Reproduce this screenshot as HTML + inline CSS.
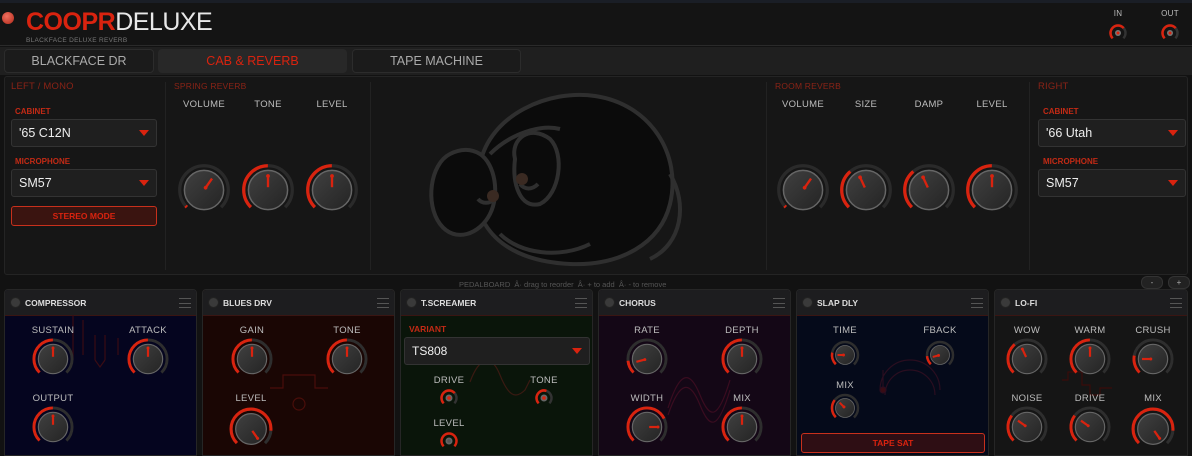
<!DOCTYPE html>
<html><head><meta charset="utf-8"><style>
*{box-sizing:border-box;margin:0;padding:0}
body{width:1192px;height:456px;background:#121212;font-family:"Liberation Sans",sans-serif;position:relative;overflow:hidden;color:#bbb}
.a{position:absolute}
.lbl{position:absolute;font-size:9.5px;color:#bdbdbd;transform:translateX(-50%);white-space:nowrap;letter-spacing:.3px}
.k{position:absolute;display:block;margin-left:-28px;margin-top:-28px;overflow:visible}
.sec{position:absolute;font-size:9px;color:#8a2316;letter-spacing:.2px}
.rl{position:absolute;font-size:8px;color:#c22a15;font-weight:bold}
.dd{position:absolute;background:#1f1f1f;border:1px solid #333;border-radius:3px;color:#eee;font-size:12.5px;padding-left:7px;display:flex;align-items:center}
.dd:after{content:"";position:absolute;right:7px;top:50%;margin-top:-3px;border-left:5px solid transparent;border-right:5px solid transparent;border-top:6px solid #d9230f}
.tab{position:absolute;top:49px;height:24px;border:1px solid #2c2c2c;border-radius:4px;background:#1b1b1b;color:#aaa;font-size:12.5px;display:flex;align-items:center;justify-content:center}
.ped{position:absolute;top:289px;height:167px;border-radius:4px 4px 0 0;overflow:hidden;border:1px solid #262626}
.ph{height:26px;background:#1d1d1f;border-bottom:1px solid #3a1512;position:relative}
.ph .led{position:absolute;left:5px;top:7px;width:11px;height:11px;border-radius:50%;background:#3a3a3a;border:1px solid #222}
.ph .t{position:absolute;left:20px;top:8px;font-size:8.5px;font-weight:bold;color:#ddd}
.ph .m{position:absolute;right:5px;top:8px;width:12px;height:10px;border-top:1px solid #555;border-bottom:1px solid #555}
.ph .m:after{content:"";position:absolute;left:0;right:0;top:4px;border-top:1px solid #555}
svg circle.b{fill:url(#g);stroke:#666;stroke-width:1.6}
.s44{margin-left:-22px;margin-top:-22px}.s46{margin-left:-23px;margin-top:-23px}.s30{margin-left:-15px;margin-top:-15px}.s20{margin-left:-10px;margin-top:-10px}
</style></head><body>
<svg width="0" height="0" style="position:absolute"><defs>
<linearGradient id="g" x1="0" y1="0" x2="1" y2="1"><stop offset="0" stop-color="#404040"/><stop offset="1" stop-color="#242424"/></linearGradient>
</defs></svg>

<div class="a" style="left:0;top:0;width:1192px;height:3px;background:#1a1e26"></div>
<div class="a" style="left:0;top:3px;width:1192px;height:43px;background:#141414;border-bottom:1px solid #2a2a2a"></div>
<div class="a" style="left:2px;top:12px;width:12px;height:12px;border-radius:50%;background:radial-gradient(circle at 40% 35%,#f07060,#b02818)"></div>
<div class="a" style="left:26px;top:8px;font-size:25px;font-weight:bold;letter-spacing:-.5px;line-height:28px"><span style="color:#d9230f">COOPR</span><span style="color:#e8e8e8;font-weight:normal">DELUXE</span></div>
<div class="a" style="left:26px;top:37px;font-size:6.5px;color:#777;letter-spacing:.3px">BLACKFACE DELUXE REVERB</div>
<div class="lbl" style="left:1118px;top:9px;font-size:8px">IN</div>
<div class="lbl" style="left:1170px;top:9px;font-size:8px">OUT</div>

<div class="a" style="left:0;top:47px;width:1192px;height:28px;background:#1f1f1f"></div>
<div class="tab" style="left:4px;width:150px">BLACKFACE DR</div>
<div class="tab" style="left:158px;width:189px;background:#282828;color:#d9230f;border-color:#282828">CAB &amp; REVERB</div>
<div class="tab" style="left:352px;width:169px">TAPE MACHINE</div>

<svg class="k s20" style="left:1118px;top:33px" width="20" height="20" viewBox="-10 -10 20 20"><circle r="7.5" fill="none" stroke="#333" stroke-width="2.5" stroke-dasharray="35 60" transform="rotate(135)"/><circle r="7.5" fill="none" stroke="#d9230f" stroke-width="2.5" stroke-dasharray="24 60" transform="rotate(135)"/><circle r="3" fill="#777"/><circle r="1.5" fill="#d9230f"/></svg>
<svg class="k s20" style="left:1170px;top:33px" width="20" height="20" viewBox="-10 -10 20 20"><circle r="7.5" fill="none" stroke="#333" stroke-width="2.5" stroke-dasharray="35 60" transform="rotate(135)"/><circle r="7.5" fill="none" stroke="#d9230f" stroke-width="2.5" stroke-dasharray="24 60" transform="rotate(135)"/><circle r="3" fill="#777"/><circle r="1.5" fill="#d9230f"/></svg>

<div class="a" style="left:4px;top:76px;width:1184px;height:199px;background:#161616;border:1px solid #242424;border-radius:3px"></div>
<div class="a" style="left:165px;top:82px;width:1px;height:188px;background:#222"></div>
<div class="a" style="left:370px;top:82px;width:1px;height:188px;background:#222"></div>
<div class="a" style="left:766px;top:82px;width:1px;height:188px;background:#222"></div>
<div class="a" style="left:1029px;top:82px;width:1px;height:188px;background:#222"></div>

<div class="sec" style="left:11px;top:81px;font-size:9.5px">LEFT / MONO</div>
<div class="rl" style="left:15px;top:107px">CABINET</div>
<div class="dd" style="left:11px;top:119px;width:146px;height:28px">'65 C12N</div>
<div class="rl" style="left:15px;top:157px">MICROPHONE</div>
<div class="dd" style="left:11px;top:169px;width:146px;height:28px">SM57</div>
<div class="a" style="left:11px;top:206px;width:146px;height:20px;background:#3a1410;border:1px solid #c8301c;border-radius:3px;color:#d9230f;font-size:8.5px;font-weight:bold;display:flex;align-items:center;justify-content:center">STEREO MODE</div>

<div class="sec" style="left:174px;top:81px;font-size:8.5px">SPRING REVERB</div>
<div class="lbl" style="left:204px;top:99px">VOLUME</div>
<div class="lbl" style="left:268px;top:99px">TONE</div>
<div class="lbl" style="left:332px;top:99px">LEVEL</div>

<div class="sec" style="left:775px;top:81px;font-size:8.5px">ROOM REVERB</div>
<div class="lbl" style="left:803px;top:99px">VOLUME</div>
<div class="lbl" style="left:866px;top:99px">SIZE</div>
<div class="lbl" style="left:929px;top:99px">DAMP</div>
<div class="lbl" style="left:992px;top:99px">LEVEL</div>

<div class="sec" style="left:1038px;top:81px;font-size:9.5px">RIGHT</div>
<div class="rl" style="left:1043px;top:107px">CABINET</div>
<div class="dd" style="left:1038px;top:119px;width:148px;height:28px">'66 Utah</div>
<div class="rl" style="left:1043px;top:157px">MICROPHONE</div>
<div class="dd" style="left:1038px;top:169px;width:148px;height:28px">SM57</div>

<svg class="a" style="left:420px;top:84px" width="280" height="190" viewBox="0 0 280 190">
<g fill="none" stroke="#2f2f2f" stroke-width="4">
<path d="M60 80 C70 30 130 5 175 12 C230 20 262 70 250 120 C240 160 200 182 150 180 C110 178 80 165 65 140" fill="#0b0b0b"/>
<path d="M250 90 C268 120 262 160 230 175"/>
<path d="M30 70 C10 80 5 120 20 140 C35 160 60 150 70 130 C80 110 75 80 60 70 C50 64 40 65 30 70 Z" fill="#0b0b0b"/>
<path d="M70 70 C90 50 120 40 140 45"/>
<path d="M95 75 C90 55 110 40 130 55 C145 70 140 110 120 120 C100 125 92 100 95 75 Z" fill="#0b0b0b"/>
<path d="M80 150 C100 170 140 175 170 160"/>
<path d="M58 115 C62 120 70 120 74 115"/>
<path d="M100 100 C105 106 112 106 118 100"/>
</g>
<circle cx="73" cy="112" r="6" fill="#3a2a22"/><circle cx="102" cy="95" r="6" fill="#3a2a22"/>
</svg>

<svg class="k" style="left:204px;top:190px" width="56" height="56" viewBox="-30 -30 60 60"><circle r="26" fill="none" stroke="#2a2a2a" stroke-width="3.5" stroke-dasharray="122.5 200" transform="rotate(135)"/><circle class="b" r="21"/><circle r="26" fill="none" stroke="#d9230f" stroke-width="3.5" stroke-dasharray="2 200" transform="rotate(135)"/><g transform="rotate(35)"><line y1="-3" y2="-15" stroke="#d9230f" stroke-width="2.5"/><circle cy="-3" r="2" fill="#d9230f"/></g></svg>
<svg class="k" style="left:268px;top:190px" width="56" height="56" viewBox="-30 -30 60 60"><circle r="26" fill="none" stroke="#2a2a2a" stroke-width="3.5" stroke-dasharray="122.5 200" transform="rotate(135)"/><circle class="b" r="21"/><circle r="26" fill="none" stroke="#d9230f" stroke-width="3.5" stroke-dasharray="61 200" transform="rotate(135)"/><line y1="-3" y2="-15" stroke="#d9230f" stroke-width="2.5"/><circle cy="-15" r="2" fill="#d9230f"/></svg>
<svg class="k" style="left:332px;top:190px" width="56" height="56" viewBox="-30 -30 60 60"><circle r="26" fill="none" stroke="#2a2a2a" stroke-width="3.5" stroke-dasharray="122.5 200" transform="rotate(135)"/><circle class="b" r="21"/><circle r="26" fill="none" stroke="#d9230f" stroke-width="3.5" stroke-dasharray="61 200" transform="rotate(135)"/><line y1="-3" y2="-15" stroke="#d9230f" stroke-width="2.5"/><circle cy="-15" r="2" fill="#d9230f"/></svg>
<svg class="k" style="left:803px;top:190px" width="56" height="56" viewBox="-30 -30 60 60"><circle r="26" fill="none" stroke="#2a2a2a" stroke-width="3.5" stroke-dasharray="122.5 200" transform="rotate(135)"/><circle class="b" r="21"/><circle r="26" fill="none" stroke="#d9230f" stroke-width="3.5" stroke-dasharray="2 200" transform="rotate(135)"/><g transform="rotate(35)"><line y1="-3" y2="-15" stroke="#d9230f" stroke-width="2.5"/><circle cy="-3" r="2" fill="#d9230f"/></g></svg>
<svg class="k" style="left:866px;top:190px" width="56" height="56" viewBox="-30 -30 60 60"><circle r="26" fill="none" stroke="#2a2a2a" stroke-width="3.5" stroke-dasharray="122.5 200" transform="rotate(135)"/><circle class="b" r="21"/><circle r="26" fill="none" stroke="#d9230f" stroke-width="3.5" stroke-dasharray="43 200" transform="rotate(135)"/><g transform="rotate(-25)"><line y1="-3" y2="-15" stroke="#d9230f" stroke-width="2.5"/><circle cy="-15" r="2" fill="#d9230f"/></g></svg>
<svg class="k" style="left:929px;top:190px" width="56" height="56" viewBox="-30 -30 60 60"><circle r="26" fill="none" stroke="#2a2a2a" stroke-width="3.5" stroke-dasharray="122.5 200" transform="rotate(135)"/><circle class="b" r="21"/><circle r="26" fill="none" stroke="#d9230f" stroke-width="3.5" stroke-dasharray="43 200" transform="rotate(135)"/><g transform="rotate(-25)"><line y1="-3" y2="-15" stroke="#d9230f" stroke-width="2.5"/><circle cy="-15" r="2" fill="#d9230f"/></g></svg>
<svg class="k" style="left:992px;top:190px" width="56" height="56" viewBox="-30 -30 60 60"><circle r="26" fill="none" stroke="#2a2a2a" stroke-width="3.5" stroke-dasharray="122.5 200" transform="rotate(135)"/><circle class="b" r="21"/><circle r="26" fill="none" stroke="#d9230f" stroke-width="3.5" stroke-dasharray="61 200" transform="rotate(135)"/><line y1="-3" y2="-15" stroke="#d9230f" stroke-width="2.5"/><circle cy="-15" r="2" fill="#d9230f"/></svg>

<div class="a" style="left:459px;top:280px;font-size:7.5px;color:#555;white-space:nowrap">PEDALBOARD &nbsp;Â· drag to reorder &nbsp;Â· + to add &nbsp;Â· - to remove</div>
<div class="a" style="left:1141px;top:276px;width:22px;height:13px;border-radius:6px;background:#222;border:1px solid #333;color:#aaa;font-size:8px;text-align:center;line-height:11px">-</div>
<div class="a" style="left:1168px;top:276px;width:22px;height:13px;border-radius:6px;background:#222;border:1px solid #333;color:#aaa;font-size:8px;text-align:center;line-height:11px">+</div>

<div class="ped" style="left:4px;width:193px;background:#05051f"><div class="ph"><div class="led"></div><div class="t">COMPRESSOR</div><div class="m"></div></div></div>
<div class="ped" style="left:202px;width:193px;background:#1a0604"><div class="ph"><div class="led"></div><div class="t">BLUES DRV</div><div class="m"></div></div></div>
<div class="ped" style="left:400px;width:193px;background:#0a150a"><div class="ph"><div class="led"></div><div class="t">T.SCREAMER</div><div class="m"></div></div></div>
<div class="ped" style="left:598px;width:193px;background:#140716"><div class="ph"><div class="led"></div><div class="t">CHORUS</div><div class="m"></div></div></div>
<div class="ped" style="left:796px;width:193px;background:#050a1a"><div class="ph"><div class="led"></div><div class="t">SLAP DLY</div><div class="m"></div></div></div>
<div class="ped" style="left:994px;width:194px;background:#151515"><div class="ph"><div class="led"></div><div class="t">LO-FI</div><div class="m"></div></div></div>

<svg class="a" style="left:0;top:300px" width="1192" height="156" fill="none" stroke-width="1.2">
<g stroke="#3a0c14"><path d="M73 15 V60 M83 20 V55 M95 35 V60 M105 35 V60 M95 60 L100 67 L105 60 M118 38 V55"/></g>
<g stroke="#4a0e0a"><path d="M270 88 H283 V75 H315 V88 H328"/><circle cx="299" cy="104" r="6"/></g>
<g stroke="#3a1a12"><path d="M470 82 C480 55 492 55 500 75 C508 95 515 100 525 90 L530 80"/></g>
<g stroke="#3a0c20"><path d="M668 108 C680 70 690 70 700 95 C710 120 718 120 730 80 M668 115 C680 80 690 80 700 105 C710 130 718 130 730 90"/></g>
<g stroke="#2a0e20"><path d="M880 90 A30 30 0 0 1 940 90 M885 95 A25 25 0 0 1 935 95 M883 70 V90"/><circle cx="883" cy="90" r="3" fill="#3a0c14"/></g>
<g stroke="#3a0c0a"><path d="M1062 80 H1068 V72 H1082 V85 H1090 V95 H1100 V88 H1112"/></g>
</svg>

<div class="lbl" style="left:53px;top:325px">SUSTAIN</div>
<div class="lbl" style="left:148px;top:325px">ATTACK</div>
<div class="lbl" style="left:53px;top:393px">OUTPUT</div>
<div class="lbl" style="left:252px;top:325px">GAIN</div>
<div class="lbl" style="left:347px;top:325px">TONE</div>
<div class="lbl" style="left:251px;top:393px">LEVEL</div>
<div class="rl" style="left:409px;top:324px;font-size:8.5px">VARIANT</div>
<div class="dd" style="left:404px;top:337px;width:186px;height:28px;font-size:12px">TS808</div>
<div class="lbl" style="left:449px;top:375px">DRIVE</div>
<div class="lbl" style="left:544px;top:375px">TONE</div>
<div class="lbl" style="left:449px;top:418px">LEVEL</div>
<div class="lbl" style="left:647px;top:325px">RATE</div>
<div class="lbl" style="left:742px;top:325px">DEPTH</div>
<div class="lbl" style="left:647px;top:393px">WIDTH</div>
<div class="lbl" style="left:742px;top:393px">MIX</div>
<div class="lbl" style="left:845px;top:325px">TIME</div>
<div class="lbl" style="left:940px;top:325px">FBACK</div>
<div class="lbl" style="left:845px;top:380px">MIX</div>
<div class="a" style="left:801px;top:433px;width:184px;height:20px;background:#2e0e14;border:1px solid #c8301c;border-radius:3px;color:#d9230f;font-size:8.5px;font-weight:bold;display:flex;align-items:center;justify-content:center">TAPE SAT</div>
<div class="lbl" style="left:1027px;top:325px">WOW</div>
<div class="lbl" style="left:1090px;top:325px">WARM</div>
<div class="lbl" style="left:1153px;top:325px">CRUSH</div>
<div class="lbl" style="left:1027px;top:393px">NOISE</div>
<div class="lbl" style="left:1090px;top:393px">DRIVE</div>
<div class="lbl" style="left:1153px;top:393px">MIX</div>

<svg class="k s44" style="left:53px;top:359px" width="44" height="44" viewBox="-30 -30 60 60"><circle r="26" fill="none" stroke="#2e2e2e" stroke-width="4" stroke-dasharray="122.5 200" transform="rotate(135)"/><circle class="b" r="20"/><circle r="26" fill="none" stroke="#d9230f" stroke-width="4" stroke-dasharray="61 200" transform="rotate(135)"/><line y1="-3" y2="-15" stroke="#d9230f" stroke-width="3"/><circle cy="-15" r="2" fill="#d9230f"/></svg>
<svg class="k s44" style="left:148px;top:359px" width="44" height="44" viewBox="-30 -30 60 60"><circle r="26" fill="none" stroke="#2e2e2e" stroke-width="4" stroke-dasharray="122.5 200" transform="rotate(135)"/><circle class="b" r="20"/><circle r="26" fill="none" stroke="#d9230f" stroke-width="4" stroke-dasharray="61 200" transform="rotate(135)"/><line y1="-3" y2="-15" stroke="#d9230f" stroke-width="3"/><circle cy="-15" r="2" fill="#d9230f"/></svg>
<svg class="k s44" style="left:53px;top:427px" width="44" height="44" viewBox="-30 -30 60 60"><circle r="26" fill="none" stroke="#2e2e2e" stroke-width="4" stroke-dasharray="122.5 200" transform="rotate(135)"/><circle class="b" r="20"/><circle r="26" fill="none" stroke="#d9230f" stroke-width="4" stroke-dasharray="61 200" transform="rotate(135)"/><line y1="-3" y2="-15" stroke="#d9230f" stroke-width="3"/><circle cy="-15" r="2" fill="#d9230f"/></svg>
<svg class="k s44" style="left:252px;top:359px" width="44" height="44" viewBox="-30 -30 60 60"><circle r="26" fill="none" stroke="#2e2e2e" stroke-width="4" stroke-dasharray="122.5 200" transform="rotate(135)"/><circle class="b" r="20"/><circle r="26" fill="none" stroke="#d9230f" stroke-width="4" stroke-dasharray="61 200" transform="rotate(135)"/><line y1="-3" y2="-15" stroke="#d9230f" stroke-width="3"/><circle cy="-15" r="2" fill="#d9230f"/></svg>
<svg class="k s44" style="left:347px;top:359px" width="44" height="44" viewBox="-30 -30 60 60"><circle r="26" fill="none" stroke="#2e2e2e" stroke-width="4" stroke-dasharray="122.5 200" transform="rotate(135)"/><circle class="b" r="20"/><circle r="26" fill="none" stroke="#d9230f" stroke-width="4" stroke-dasharray="61 200" transform="rotate(135)"/><line y1="-3" y2="-15" stroke="#d9230f" stroke-width="3"/><circle cy="-15" r="2" fill="#d9230f"/></svg>
<svg class="k s46" style="left:251px;top:429px" width="46" height="46" viewBox="-30 -30 60 60"><circle r="26" fill="none" stroke="#2e2e2e" stroke-width="4" stroke-dasharray="122.5 200" transform="rotate(135)"/><circle class="b" r="20"/><circle r="26" fill="none" stroke="#d9230f" stroke-width="4" stroke-dasharray="104 200" transform="rotate(135)"/><g transform="rotate(145)"><line y1="-3" y2="-15" stroke="#d9230f" stroke-width="3"/><circle cy="-15" r="2" fill="#d9230f"/></g></svg>
<svg class="k s44" style="left:647px;top:359px" width="44" height="44" viewBox="-30 -30 60 60"><circle r="26" fill="none" stroke="#2e2e2e" stroke-width="4" stroke-dasharray="122.5 200" transform="rotate(135)"/><circle class="b" r="20"/><circle r="26" fill="none" stroke="#d9230f" stroke-width="4" stroke-dasharray="18 200" transform="rotate(135)"/><g transform="rotate(-105)"><line y1="-3" y2="-15" stroke="#d9230f" stroke-width="3"/><circle cy="-3" r="2" fill="#d9230f"/></g></svg>
<svg class="k s44" style="left:742px;top:359px" width="44" height="44" viewBox="-30 -30 60 60"><circle r="26" fill="none" stroke="#2e2e2e" stroke-width="4" stroke-dasharray="122.5 200" transform="rotate(135)"/><circle class="b" r="20"/><circle r="26" fill="none" stroke="#d9230f" stroke-width="4" stroke-dasharray="61 200" transform="rotate(135)"/><line y1="-3" y2="-15" stroke="#d9230f" stroke-width="3"/><circle cy="-15" r="2" fill="#d9230f"/></svg>
<svg class="k s44" style="left:647px;top:427px" width="44" height="44" viewBox="-30 -30 60 60"><circle r="26" fill="none" stroke="#2e2e2e" stroke-width="4" stroke-dasharray="122.5 200" transform="rotate(135)"/><circle class="b" r="20"/><circle r="26" fill="none" stroke="#d9230f" stroke-width="4" stroke-dasharray="90 200" transform="rotate(135)"/><g transform="rotate(90)"><line y1="-3" y2="-15" stroke="#d9230f" stroke-width="3"/><circle cy="-15" r="2" fill="#d9230f"/></g></svg>
<svg class="k s44" style="left:742px;top:427px" width="44" height="44" viewBox="-30 -30 60 60"><circle r="26" fill="none" stroke="#2e2e2e" stroke-width="4" stroke-dasharray="122.5 200" transform="rotate(135)"/><circle class="b" r="20"/><circle r="26" fill="none" stroke="#d9230f" stroke-width="4" stroke-dasharray="61 200" transform="rotate(135)"/><line y1="-3" y2="-15" stroke="#d9230f" stroke-width="3"/><circle cy="-15" r="2" fill="#d9230f"/></svg>
<svg class="k s30" style="left:845px;top:355px" width="30" height="30" viewBox="-30 -30 60 60"><circle r="26" fill="none" stroke="#2e2e2e" stroke-width="5" stroke-dasharray="122.5 200" transform="rotate(135)"/><circle class="b" r="19"/><circle r="26" fill="none" stroke="#d9230f" stroke-width="5" stroke-dasharray="25 200" transform="rotate(135)"/><g transform="rotate(-90)"><line y1="-3" y2="-15" stroke="#d9230f" stroke-width="4"/><circle cy="-3" r="3" fill="#d9230f"/></g></svg>
<svg class="k s30" style="left:940px;top:355px" width="30" height="30" viewBox="-30 -30 60 60"><circle r="26" fill="none" stroke="#2e2e2e" stroke-width="5" stroke-dasharray="122.5 200" transform="rotate(135)"/><circle class="b" r="19"/><circle r="26" fill="none" stroke="#d9230f" stroke-width="5" stroke-dasharray="18 200" transform="rotate(135)"/><g transform="rotate(-105)"><line y1="-3" y2="-15" stroke="#d9230f" stroke-width="4"/><circle cy="-3" r="3" fill="#d9230f"/></g></svg>
<svg class="k s30" style="left:845px;top:408px" width="30" height="30" viewBox="-30 -30 60 60"><circle r="26" fill="none" stroke="#2e2e2e" stroke-width="5" stroke-dasharray="122.5 200" transform="rotate(135)"/><circle class="b" r="19"/><circle r="26" fill="none" stroke="#d9230f" stroke-width="5" stroke-dasharray="37 200" transform="rotate(135)"/><g transform="rotate(-45)"><line y1="-3" y2="-15" stroke="#d9230f" stroke-width="4"/><circle cy="-3" r="3" fill="#d9230f"/></g></svg>
<svg class="k s44" style="left:1027px;top:359px" width="44" height="44" viewBox="-30 -30 60 60"><circle r="26" fill="none" stroke="#2e2e2e" stroke-width="4" stroke-dasharray="122.5 200" transform="rotate(135)"/><circle class="b" r="20"/><circle r="26" fill="none" stroke="#d9230f" stroke-width="4" stroke-dasharray="43 200" transform="rotate(135)"/><g transform="rotate(-25)"><line y1="-3" y2="-15" stroke="#d9230f" stroke-width="3"/><circle cy="-15" r="2" fill="#d9230f"/></g></svg>
<svg class="k s44" style="left:1090px;top:359px" width="44" height="44" viewBox="-30 -30 60 60"><circle r="26" fill="none" stroke="#2e2e2e" stroke-width="4" stroke-dasharray="122.5 200" transform="rotate(135)"/><circle class="b" r="20"/><circle r="26" fill="none" stroke="#d9230f" stroke-width="4" stroke-dasharray="61 200" transform="rotate(135)"/><line y1="-3" y2="-15" stroke="#d9230f" stroke-width="3"/><circle cy="-15" r="2" fill="#d9230f"/></svg>
<svg class="k s44" style="left:1153px;top:359px" width="44" height="44" viewBox="-30 -30 60 60"><circle r="26" fill="none" stroke="#2e2e2e" stroke-width="4" stroke-dasharray="122.5 200" transform="rotate(135)"/><circle class="b" r="20"/><circle r="26" fill="none" stroke="#d9230f" stroke-width="4" stroke-dasharray="25 200" transform="rotate(135)"/><g transform="rotate(-90)"><line y1="-3" y2="-15" stroke="#d9230f" stroke-width="3"/><circle cy="-3" r="2" fill="#d9230f"/></g></svg>
<svg class="k s44" style="left:1027px;top:427px" width="44" height="44" viewBox="-30 -30 60 60"><circle r="26" fill="none" stroke="#2e2e2e" stroke-width="4" stroke-dasharray="122.5 200" transform="rotate(135)"/><circle class="b" r="20"/><circle r="26" fill="none" stroke="#d9230f" stroke-width="4" stroke-dasharray="37 200" transform="rotate(135)"/><g transform="rotate(-55)"><line y1="-3" y2="-15" stroke="#d9230f" stroke-width="3"/><circle cy="-3" r="2" fill="#d9230f"/></g></svg>
<svg class="k s44" style="left:1090px;top:427px" width="44" height="44" viewBox="-30 -30 60 60"><circle r="26" fill="none" stroke="#2e2e2e" stroke-width="4" stroke-dasharray="122.5 200" transform="rotate(135)"/><circle class="b" r="20"/><circle r="26" fill="none" stroke="#d9230f" stroke-width="4" stroke-dasharray="37 200" transform="rotate(135)"/><g transform="rotate(-55)"><line y1="-3" y2="-15" stroke="#d9230f" stroke-width="3"/><circle cy="-3" r="2" fill="#d9230f"/></g></svg>
<svg class="k s46" style="left:1153px;top:429px" width="46" height="46" viewBox="-30 -30 60 60"><circle r="26" fill="none" stroke="#2e2e2e" stroke-width="4" stroke-dasharray="122.5 200" transform="rotate(135)"/><circle class="b" r="20"/><circle r="26" fill="none" stroke="#d9230f" stroke-width="4" stroke-dasharray="104 200" transform="rotate(135)"/><g transform="rotate(145)"><line y1="-3" y2="-15" stroke="#d9230f" stroke-width="3"/><circle cy="-15" r="2" fill="#d9230f"/></g></svg>

<svg class="k s20" style="left:449px;top:398px" width="20" height="20" viewBox="-10 -10 20 20"><circle r="7.5" fill="none" stroke="#333" stroke-width="2.5" stroke-dasharray="35 60" transform="rotate(135)"/><circle r="7.5" fill="none" stroke="#d9230f" stroke-width="2.5" stroke-dasharray="24 60" transform="rotate(135)"/><circle r="3.5" fill="#666"/><circle r="1.8" fill="#d9230f"/></svg>
<svg class="k s20" style="left:544px;top:398px" width="20" height="20" viewBox="-10 -10 20 20"><circle r="7.5" fill="none" stroke="#333" stroke-width="2.5" stroke-dasharray="35 60" transform="rotate(135)"/><circle r="7.5" fill="none" stroke="#d9230f" stroke-width="2.5" stroke-dasharray="20 60" transform="rotate(135)"/><circle r="3.5" fill="#666"/><circle r="1.8" fill="#d9230f"/></svg>
<svg class="k s20" style="left:449px;top:441px" width="20" height="20" viewBox="-10 -10 20 20"><circle r="7.5" fill="none" stroke="#d9230f" stroke-width="2.5" stroke-dasharray="35 60" transform="rotate(135)"/><circle r="3.5" fill="#666"/><circle r="1.8" fill="#555"/></svg>
</body></html>
